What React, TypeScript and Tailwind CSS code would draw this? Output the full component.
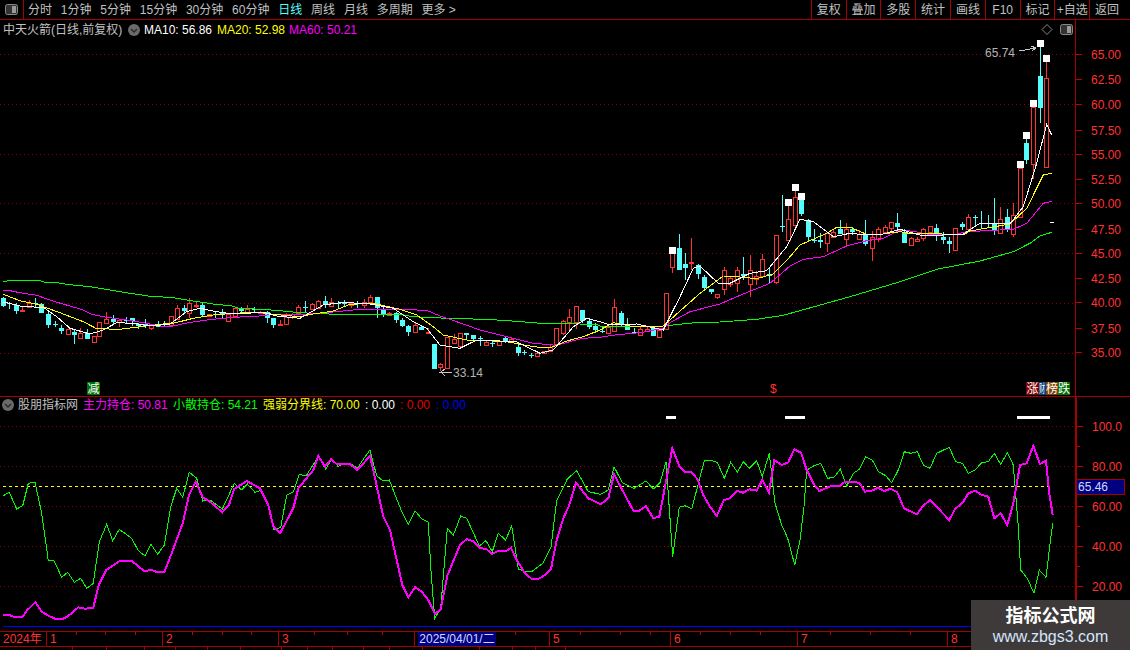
const RED = '#ff3232'
const CYAN = '#54fcfc'
const FONT = '"Liberation Sans","Noto Sans CJK SC",sans-serif'

type Row = [number, number, number, number, number, number, number?]
type Zone = { ox: number; oy: number; rows: Row[] }
type Seg = [number, number, number[]]

// 0 = red hollow, 1 = cyan solid, last flag = white cap on top of the wick
const candles: Zone[] = [
  { ox: 0, oy: 270, rows: [
    [10,85,107,80,112,1],[27,100,103,95,116,1],[48,104,122,98,132,1],[67,120,124,108,126,0],[86,100,112,90,114,0],
    [105,100,103,85,115,1],[124,102,128,98,128,1],[145,132,164,124,174,1],[164,161,163,152,172,1],[184,174,183,165,192,1],
    [203,178,191,178,194,0],[223,186,194,178,222,1],[241,190,203,175,206,0],[260,190,206,178,208,1],[281,198,215,198,218,0],
    [298,157,199,157,201,0],[319,148,158,126,160,0],[338,148,155,136,165,1],[358,150,157,148,170,0],[377,149,152,141,158,1],
    [395,144,153,144,168,1],[415,163,168,158,176,1],[434,163,169,148,173,1],[454,163,173,163,179,0],[473,166,170,154,171,1],
    [492,161,164,154,170,1],[512,139,165,139,170,0],[532,114,147,106,148,0],[551,114,122,105,130,1],[568,100,128,85,143,0],
    [588,104,107,97,114,0],[607,105,134,97,137,1],[627,133,138,131,142,0],[646,133,136,122,144,1],[666,130,133,118,146,1],
    [685,131,152,128,153,0],[704,115,138,113,142,0],[724,113,122,110,130,1],[742,118,130,105,132,0],[763,118,120,112,130,1],
    [780,125,128,122,131,0],[802,127,143,122,159,1],[820,144,164,144,174,1],[841,162,166,150,168,0],[859,140,161,130,162,0],
    [877,133,140,130,148,0],[895,110,130,105,135,0],
  ] },
  { ox: 300, oy: 280, rows: [
    [16,80,83,62,100,1],[37,72,87,68,90,0],[55,62,84,60,88,0],[75,63,74,48,85,1],[94,65,78,55,80,0],[113,68,72,62,88,1],
    [133,68,71,60,78,1],[153,70,74,65,85,0],[172,68,72,62,85,1],[192,65,74,58,85,0],[211,52,66,45,70,0],[230,51,84,51,113,1],
    [250,90,104,76,112,1],[268,100,104,96,108,0],[287,100,120,96,130,1],[307,120,138,115,140,1],[325,138,156,135,168,1],
    [346,135,155,125,158,0],[364,140,149,136,150,1],[384,155,160,145,162,0],[403,192,266,192,266,1],[421,251,262,250,272,0],
    [442,172,264,172,264,0],[461,177,188,162,190,0],[481,160,197,158,198,0],[499,160,164,160,176,1],[520,166,176,165,185,1],
    [539,175,178,168,197,1],[558,186,196,182,198,0],[577,188,190,182,200,1],[596,182,196,180,198,0],[616,175,186,172,190,1],
    [634,176,186,172,190,0],[655,200,218,192,228,1],[673,216,218,210,226,1],[694,225,227,218,233,1],[712,220,227,215,230,0],
    [733,214,218,212,220,0],[750,200,212,196,214,0],[769,145,191,143,193,0],[790,122,158,120,164,0],[808,112,125,88,150,0],
    [828,79,125,79,148,0],[847,90,124,90,128,1],[866,123,140,115,148,1],[886,139,150,128,160,1],
  ] },
  { ox: 600, oy: 170, rows: [
    [5,482,484,470,490,1],[25,472,488,470,490,0],[43,412,482,388,484,0],[64,430,462,424,470,1],[82,468,480,445,480,1],
    [103,486,488,475,490,1],[121,476,494,470,495,0],[141,477,482,470,487,0],[160,474,497,470,497,1],[178,480,500,475,500,0],
    [199,370,478,370,480,0],[217,249,292,232,308,0,1],[238,234,300,192,300,1],[256,282,294,250,330,1],[274,276,279,204,300,0],
    [295,286,312,282,326,1],[313,322,354,315,360,1],[334,358,365,356,372,1],[352,373,380,371,386,0],[373,301,356,292,375,0],
    [391,325,342,320,350,0],[412,301,340,290,366,0],[430,313,318,262,330,1],[449,301,342,255,380,0],[469,317,327,303,345,0],
    [487,268,318,252,325,0],[508,313,319,295,340,1],[527,196,336,196,342,0],[546,168,171,75,186,1],[565,148,209,87,210,0,1],
    [584,82,166,42,178,0,1],[604,87,132,69,137,1,1],[623,149,201,147,214,1],[643,210,213,178,218,1],[661,210,215,190,233,1],
    [681,190,218,185,245,0],[700,187,200,178,202,0],[721,177,191,150,193,1],[739,176,208,160,228,0],[757,178,186,170,194,1],
    [778,191,206,180,208,0],[796,195,221,150,228,1],[817,200,233,183,273,0],[835,178,208,172,215,0],[856,172,187,165,190,0],
    [874,157,173,155,182,0],[892,159,171,128,182,1],
  ] },
  { ox: 880, oy: 30, rows: [
    [73,605,638,598,640,1],[92,625,645,622,648,0],[112,628,632,620,636,0],[130,598,625,595,632,0],[151,589,605,587,610,0],
    [169,595,618,582,633,1],[189,622,630,605,642,1],[208,632,641,620,668,1],[226,595,659,595,660,0],[247,582,590,575,600,1],
    [265,562,597,552,600,0],[286,560,562,555,590,1],[304,578,580,543,595,1],[325,578,582,555,590,1],[343,580,600,504,614,1],
    [361,568,608,530,610,0],[382,561,598,537,605,1],[400,555,611,520,620,0],[421,414,560,393,565,0,1],[439,339,390,306,402,1,1],
    [460,232,401,210,446,0,1],[479,138,234,30,278,1,1],[499,145,410,75,410,0,1],
  ] },
]

const greenTop: Seg[] = [
  [0,270,[10,35,30,31,115,31,135,37,170,38,210,44,270,50,330,60,390,70,445,78,520,83,560,90,640,102,695,108,715,114,800,119,860,124,900,128]],
  [300,280,[0,96,105,103,300,103,340,110,440,115,470,115,590,120,650,124,720,130,890,133]],
  [600,170,[0,468,190,468,285,458,360,456,470,448,550,436,650,408,750,380,850,350,900,335]],
  [880,30,[170,718,300,693,400,665,450,640,480,618,515,607]],
]
const magentaTop: Seg[] = [
  [0,270,[10,61,30,62,60,68,110,76,165,95,210,108,250,120,275,133,320,142,380,150,430,158,480,168,520,168,555,160,620,150,700,142,770,139,800,135,900,134]],
  [300,280,[0,102,100,96,180,88,280,88,380,91,420,108,470,125,540,150,640,175,700,190,770,196,820,182,850,175,900,172]],
  [600,170,[0,502,50,494,120,488,190,475,215,455,270,425,360,402,410,380,510,340,570,288,610,268,670,260,740,228,800,212,850,205,900,180]],
  [880,30,[100,604,140,612,230,612,260,605,400,598,440,580,490,520,515,514]],
]
const yellowTop: Seg[] = [
  [0,270,[10,73,60,92,110,103,180,128,250,155,290,176,360,178,420,170,490,162,520,160,580,145,640,135,700,130,770,127,820,133,900,140]],
  [300,280,[0,104,40,102,100,93,150,73,220,70,300,88,350,105,400,140,430,165,500,180,560,182,620,185,700,200,750,204,800,183,850,170,900,150]],
  [600,170,[0,475,40,458,90,468,190,468,230,432,300,370,370,318,410,320,470,326,520,312,570,260,600,225,680,190,710,172,750,172,800,193,850,192,900,185]],
  [880,30,[100,612,140,610,250,615,270,603,390,582,440,535,490,435,515,430]],
]
const whiteTop: Seg[] = [
  [0,270,[10,96,70,110,130,112,170,140,210,175,270,192,310,180,350,158,400,160,450,168,510,162,560,125,600,115,650,125,700,132,790,127,830,138,900,145]],
  [300,280,[0,108,70,75,120,68,200,70,280,85,340,125,380,145,420,195,480,205,530,180,600,183,650,185,720,220,760,210,820,140,860,115,900,125]],
  [600,170,[0,455,30,465,110,462,190,480,240,380,280,295,300,288,355,340,390,340,450,310,500,302,560,230,600,148,640,155,700,200,750,190,800,195,850,192,900,178]],
  [880,30,[130,618,250,612,300,580,390,582,430,530,470,400,500,283,515,315]],
]

const magentaLow: Seg[] = [
  [0,410,[10,615,28,615,40,620,68,620,80,602,106,577,125,605,145,617,165,626,187,627,205,618,235,592,255,596,280,593,296,525,318,481,360,452,395,452,432,483,455,480,470,486,493,486,515,430,548,340,567,255,587,215,608,262,630,275,667,307,687,285,702,238,740,213,780,235,805,285,820,350,840,370,880,295,895,235,940,180,955,138,975,170,993,148,1010,162,1050,162,1072,180,1110,138]],
  [360,410,[42,190,70,320,90,360,127,525,145,562,165,532,185,545,205,570,225,612,242,598,262,497,300,405,320,387,342,395,360,415,378,416,397,432,415,422,440,422,453,413,470,450,495,490,515,507,535,507,555,495,573,477,590,390,610,325,628,285,648,218,685,265,722,283,745,265,762,193,820,302,838,302,858,288,880,325,898,320]],
  [660,410,[37,115,58,168,75,187,95,187,112,207,130,255,150,290,170,318,192,270,210,265,232,243,250,248,268,238,290,242,307,210,327,247,343,150,365,165,385,157,403,118,423,128,440,180,460,220,478,243,515,227,540,227,555,215,598,218,615,245,635,242,655,233,672,243,692,236,712,247,732,295,770,313,790,287,810,270,868,330,885,298,910,275,925,250,945,242,965,255,985,260,1003,325,1022,310,1042,345,1060,280,1080,165,1100,160]],
  [900,370,[360,285,380,282,400,228,420,282,438,272,448,370,458,435,458,462]],
]
const greenLow: Seg[] = [
  [0,410,[10,257,28,247,50,297,68,287,85,220,105,217,125,310,145,452,162,452,185,502,203,487,223,517,242,505,260,535,280,520,298,395,320,343,338,392,358,358,395,385,415,422,435,438,453,403,473,433,493,405,512,290,530,235,548,262,568,187,590,205,608,273,630,270,667,297,703,220,725,240,742,222,765,247,785,240,805,280,822,360,842,352,860,255,880,245,898,193,918,198,955,140,977,178,995,147,1015,170,1030,160,1050,160,1072,175,1090,148,1110,120]],
  [360,410,[50,198,70,213,88,210,125,305,145,343,165,302,185,327,205,337,212,470,224,625,242,595,262,355,280,376,302,318,320,325,358,408,378,392,397,425,415,370,437,390,455,347,475,477,495,485,515,485,548,460,573,410,590,272,622,207,650,182,685,245,722,253,745,240,762,170,787,218,822,235,858,213,880,237,900,218,918,155]],
  [660,410,[38,440,58,292,75,287,95,297,133,152,155,152,172,157,193,205,212,157,232,187,250,155,268,175,290,152,307,200,328,130,345,280,365,345,383,385,404,465,420,390,432,290,440,180,462,167,482,160,503,205,522,202,541,178,560,228,580,190,598,178,617,140,637,150,655,185,677,197,695,218,715,180,733,125,752,130,772,125,790,165,810,175,830,130,868,112,887,155,908,160,925,190,945,180,965,158,985,155,1003,130,1022,163,1042,128,1060,165,1075,350,1082,480]],
  [900,370,[382,625,402,670,418,600,438,622,448,540,458,460]],
]

function points(segs: Seg[]) {
  const out: string[] = []
  let last = -1
  for (const [ox, oy, v] of segs) {
    for (let i = 0; i < v.length; i += 2) {
      const x = ox + v[i] / 3
      if (x <= last) continue
      last = x
      out.push(`${x.toFixed(1)},${(oy + v[i + 1] / 3).toFixed(1)}`)
    }
  }
  return out.join(' ')
}

function Candles() {
  return (
    <g shapeRendering="crispEdges">
      {candles.flatMap((z) =>
        z.rows.map(([zx, top, bot, wt, wb, kind, cap]) => {
          const cx = Math.round(z.ox + zx / 3)
          const y = (v: number) => Math.round(z.oy + v / 3)
          const color = kind ? CYAN : RED
          return (
            <g key={`${z.ox}-${zx}`}>
              <line x1={cx + 0.5} x2={cx + 0.5} y1={y(wt)} y2={y(top)} stroke={color} />
              <line x1={cx + 0.5} x2={cx + 0.5} y1={y(bot)} y2={y(wb)} stroke={color} />
              {kind ? (
                <rect x={cx - 2} y={y(top)} width={5} height={Math.max(1, y(bot) - y(top))} fill={color} />
              ) : (
                <rect x={cx - 1.5} y={y(top) + 0.5} width={4} height={Math.max(1, y(bot) - y(top))} fill="#000" stroke={color} />
              )}
              {cap ? <rect x={cx - 3} y={y(wt)} width={7} height={7} fill="#fff" /> : null}
            </g>
          )
        }),
      )}
    </g>
  )
}

function Line({ segs, color, w = 1 }: { segs: Seg[]; color: string; w?: number }) {
  return <polyline points={points(segs)} fill="none" stroke={color} strokeWidth={w} shapeRendering="crispEdges" />
}

// one dot every 4px, drawn as a pattern so each dot stays a single pixel
function DotRules({ id, ys, x2 }: { id: string; ys: number[]; x2: number }) {
  return (
    <g>
      <defs>
        <pattern id={id} width="4" height="1" patternUnits="userSpaceOnUse">
          <rect width="1" height="1" fill="#900000" />
        </pattern>
      </defs>
      {ys.map((y) => (
        <rect key={y} x={0} y={y} width={x2} height={1} fill={`url(#${id})`} />
      ))}
    </g>
  )
}

function DownBadge() {
  return (
    <svg width="12" height="12" viewBox="0 0 12 12" className="shrink-0">
      <circle cx="6" cy="6" r="6" fill="#6a6a6a" />
      <polyline points="3,5 6,8 9,5" fill="none" stroke="#2a2a2a" strokeWidth="1.5" />
    </svg>
  )
}

function PanelToggle({ className }: { className?: string }) {
  return (
    <svg width="13" height="11" viewBox="0 0 13 11" className={className}>
      <rect x="0.5" y="0.5" width="12" height="10" rx="2" fill="#333" stroke="#888" />
      <rect x="7" y="2" width="4" height="7" fill="#999" />
    </svg>
  )
}

function AxisLabels({ items, minor }: { items: [number, string][]; minor: number[] }) {
  return (
    <g style={{ fontFamily: FONT, fontSize: 12 }}>
      {items.map(([y, label]) => (
        <g key={label}>
          <line x1={0} x2={6} y1={y + 0.5} y2={y + 0.5} stroke="#c00000" shapeRendering="crispEdges" />
          <text x={15} y={y + 4.5} fill={RED}>{label}</text>
        </g>
      ))}
      {minor.map((y) => (
        <line key={y} x1={0} x2={3} y1={y + 0.5} y2={y + 0.5} stroke="#c00000" shapeRendering="crispEdges" />
      ))}
    </g>
  )
}

const periods = ['分时', '1分钟', '5分钟', '15分钟', '30分钟', '60分钟', '日线', '周线', '月线', '多周期', '更多 >']
const tools = ['复权', '叠加', '多股', '统计', '画线', 'F10', '标记', '+自选', '返回']
const priceLabels: [number, string][] = [[54,'65.00'],[79,'62.50'],[104,'60.00'],[130,'57.50'],[154,'55.00'],[179,'52.50'],[203,'50.00'],[229,'47.50'],[253,'45.00'],[278,'42.50'],[302,'40.00'],[328,'37.50'],[352,'35.00']]
const lowLabels: [number, string][] = [[426,'100.0'],[466,'80.00'],[506,'60.00'],[546,'40.00'],[586,'20.00']]
const timeCells: [string, string][] = [['w-[47px]','2024年'],['w-[116px]','1'],['w-[116px]','2'],['w-[136px]','3'],['w-[135px]',''],['w-[121px]','5'],['w-[127px]','6'],['w-[150px]','7'],['flex-1','8']]
const stubCells = ['w-[73px]','w-[34px]','w-[38px]','w-[31px]','w-[32px]','w-[33px]','w-[41px]','w-[26px]','w-[25px]','w-[31px]','w-[26px]','w-[33px]','w-[57px]','w-[33px]','w-[23px]','w-[30px]']

export default function App() {
  return (
    <div className="relative flex h-[650px] w-[1130px] flex-col overflow-hidden bg-black text-xs" style={{ fontFamily: FONT }}>
      {/* top toolbar */}
      <div className="flex h-5 shrink-0 items-stretch border-b border-[#a80000] text-[#c0c0c0]">
        <div className="flex w-6 items-center justify-center border-r border-[#a80000]">
          <PanelToggle />
        </div>
        <div className="ml-1 flex items-center gap-[8.8px]">
          {periods.map((p) => (
            <span key={p} className={p === '日线' ? 'text-[#54fcfc]' : ''}>{p}</span>
          ))}
        </div>
        <div className="ml-auto mr-[6px] flex">
          {tools.map((t) => (
            <div key={t} className="flex w-[34.8px] items-center justify-center border-l border-[#a80000]">{t}</div>
          ))}
        </div>
      </div>

      {/* price panel */}
      <div className="flex h-[377px] shrink-0 border-b border-[#a80000]">
        <div className="relative w-[1075px] shrink-0">
          <div className="absolute left-[3px] top-[2px] flex items-center leading-4">
            <span className="w-[125px] text-[#c0c0c0]">中天火箭(日线,前复权)</span>
            <DownBadge />
            <span className="ml-1 w-[73px] text-white">MA10: 56.86</span>
            <span className="w-[72px] text-[#ffff00]">MA20: 52.98</span>
            <span className="text-[#ff00ff]">MA60: 50.21</span>
          </div>
          <svg width="1075" height="376" viewBox="0 20 1075 376" className="block">
            <DotRules id="dots-top" ys={[54, 104, 154, 203, 253, 303, 353]} x2={1075} />
            <Candles />
            <Line segs={greenTop} color="#00ff00" />
            <Line segs={magentaTop} color="#ff00ff" />
            <Line segs={yellowTop} color="#ffff00" />
            <Line segs={whiteTop} color="#ffffff" />
            <line x1="1050" x2="1054" y1="222.5" y2="222.5" stroke="#fff" shapeRendering="crispEdges" />
            <g style={{ fontFamily: FONT, fontSize: 12 }} fill="#b4b4b4">
              <text x="985" y="57">65.74</text>
              <text x="453" y="377">33.14</text>
            </g>
            <g fill="none" stroke="#c8c8c8" shapeRendering="crispEdges">
              <polyline points="1019,51 1036,48 1031,46" />
              <polyline points="1036,48 1032,51" />
              <polyline points="452,372 441,372 445,369" />
              <polyline points="441,372 445,376" />
            </g>
            <g style={{ fontFamily: FONT, fontSize: 12 }} fill="#fff">
              <rect x="87" y="382" width="13" height="13" fill="#007000" />
              <text x="87.5" y="393">减</text>
              <text x="770" y="393" fill={RED}>$</text>
              <rect x="1026" y="382" width="13" height="13" fill="#800000" />
              <text x="1026.5" y="393">涨</text>
              <rect x="1039" y="382" width="7" height="13" fill="#004080" />
              <text x="1039" y="393" textLength="6" lengthAdjust="spacingAndGlyphs">财</text>
              <rect x="1046" y="382" width="12" height="13" fill="#804000" />
              <text x="1046" y="393">榜</text>
              <rect x="1058" y="382" width="12" height="13" fill="#007000" />
              <text x="1058" y="393">跌</text>
            </g>
            <polygon points="1047,24.5 1052,29.5 1047,34.5 1042,29.5" fill="none" stroke="#888" />
          </svg>
          <PanelToggle className="absolute left-[1060px] top-[4px]" />
        </div>
        <div className="flex-1 border-l border-[#a80000]">
          <svg width="54" height="376" viewBox="0 20 54 376" className="block">
            <AxisLabels items={priceLabels} minor={[]} />
          </svg>
        </div>
      </div>

      {/* indicator panel */}
      <div className="flex h-[234px] shrink-0">
        <div className="relative w-[1075px] shrink-0">
          <div className="absolute left-[2px] top-0 flex items-center leading-4">
            <DownBadge />
            <span className="ml-1 w-[65px] text-[#c0c0c0]">股朋指标网</span>
            <span className="w-[90px] text-[#ff00ff]">主力持仓: 50.81</span>
            <span className="w-[90px] text-[#00ff00]">小散持仓: 54.21</span>
            <span className="w-[102px] text-[#ffff00]">强弱分界线: 70.00</span>
            <span className="w-[35px] text-white">: 0.00</span>
            <span className="w-[36px] text-[#e00000]">: 0.00</span>
            <span className="text-[#0000f0]">: 0.00</span>
          </div>
          <svg width="1075" height="234" viewBox="0 397 1075 234" className="block">
            <DotRules id="dots-low" ys={[426, 466, 506, 546, 586]} x2={1075} />
            <g shapeRendering="crispEdges" fill="#fff">
              <rect x="666" y="416" width="10" height="3" />
              <rect x="785" y="416" width="20" height="3" />
              <rect x="1017" y="416" width="33" height="3" />
            </g>
            <line x1="3" x2="1050" y1="486.5" y2="486.5" stroke="#ffff00" strokeDasharray="3 3" shapeRendering="crispEdges" />
            <Line segs={greenLow} color="#00ff00" />
            <Line segs={magentaLow} color="#ff00ff" w={2} />
            <rect x="3" y="626" width="1072" height="1" fill="#0000ff" />
          </svg>
        </div>
        <div className="flex-1 border-l-2 border-[#a80000]">
          <svg width="53" height="234" viewBox="0 397 53 234" className="block">
            <AxisLabels items={lowLabels} minor={[446, 486, 526, 566, 606]} />
          </svg>
        </div>
      </div>
      <div className="absolute left-[1076px] top-[479px] flex h-4 w-[49px] items-center border border-[#a80000] bg-[#000080] pl-px text-[#d0d8ff]">65.46</div>

      {/* time axis */}
      <div className="flex h-[16px] shrink-0 items-stretch border-y border-[#a80000] text-[#ff3232]">
        {timeCells.map(([w, label], i) => (
          <div key={i} className={`${w} flex items-center border-r border-[#a80000] pl-[3px] last:border-r-0`}>
            {label}
          </div>
        ))}
      </div>
      <div className="absolute left-[418px] top-[632px] flex h-[14px] w-[78px] items-center justify-center bg-[#000080] text-[#d0d8ff]">2025/04/01/二</div>
      <svg width="1075" height="3" className="absolute left-0 top-[632px]">
        {[76, 105, 135, 192, 222, 251, 314, 347, 382, 515, 580, 620, 650, 700, 730, 760, 830, 870, 910].map((x) => (
          <line key={x} x1={x + 0.5} x2={x + 0.5} y1="0" y2="3" stroke="#c00000" shapeRendering="crispEdges" />
        ))}
      </svg>

      {/* status row, cut off by the window */}
      <div className="flex flex-1">
        {stubCells.map((w, i) => (
          <div key={i} className={`${w} border-r border-[#a80000]`} />
        ))}
      </div>

      {/* watermark */}
      <div className="absolute bottom-0 right-0 flex h-[50px] w-[159px] flex-col items-center justify-center bg-[#3e3a3a]">
        <span className="text-lg font-bold leading-6 text-white">指标公式网</span>
        <span className="text-base leading-[18px] text-[#d4e6ff]">www.zbgs3.com</span>
      </div>
    </div>
  )
}
